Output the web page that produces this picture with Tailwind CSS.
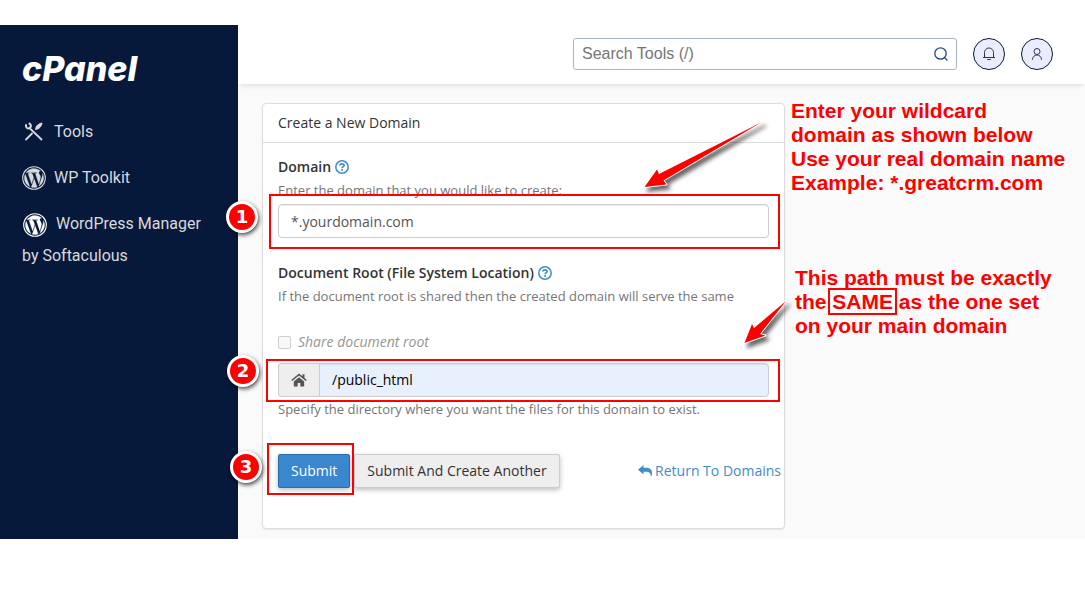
<!DOCTYPE html>
<html lang="en">
<head>
    <meta charset="UTF-8">
    <meta name="viewport" content="width=device-width, initial-scale=1.0">
    <title>cPanel - Create a New Domain</title>
    <!-- Tailwind CSS -->
    <script src="https://cdn.jsdelivr.net/npm/@tailwindcss/browser@4"></script>
</head>
<body class="bg-white pt-[25px] font-['Open_Sans',sans-serif] text-sm text-[#333333]">

    <!-- Shared icons -->
    <svg class="hidden">
        <symbol id="icon-wordpress" viewBox="0 0 24 24">
            <path fill="currentColor" stroke="currentColor" stroke-width=".3" d="M21.469 6.825c.84 1.537 1.318 3.3 1.318 5.175 0 3.979-2.156 7.456-5.363 9.325l3.295-9.527c.615-1.54.82-2.771.82-3.864 0-.405-.026-.78-.07-1.11m-7.981.105c.647-.03 1.232-.105 1.232-.105.582-.075.514-.93-.067-.899 0 0-1.755.135-2.88.135-1.064 0-2.85-.15-2.85-.15-.585-.03-.661.855-.075.885 0 0 .54.061 1.125.09l1.68 4.605-2.37 7.08L5.354 6.9c.649-.03 1.234-.1 1.234-.1.585-.075.516-.93-.065-.896 0 0-1.746.138-2.874.138-.2 0-.438-.008-.69-.015C4.911 3.15 8.235 1.215 12 1.215c2.809 0 5.365 1.072 7.286 2.833-.046-.003-.091-.009-.141-.009-1.06 0-1.812.923-1.812 1.914 0 .89.513 1.643 1.06 2.531.411.72.89 1.643.89 2.977 0 .915-.354 1.994-.821 3.479l-1.075 3.585-3.9-11.61.001.014zM12 22.784c-1.059 0-2.081-.153-3.048-.437l3.237-9.406 3.315 9.087c.024.053.05.101.078.149-1.12.393-2.325.609-3.582.609M1.211 12c0-1.564.336-3.05.935-4.39L7.29 21.709C3.694 19.96 1.212 16.271 1.211 12" transform="translate(1.300 1.300) scale(.892)"/>
            <circle cx="12" cy="12" r="11.300" fill="none" stroke="currentColor" stroke-width="1.100"/>
        </symbol>
        <symbol id="icon-help" viewBox="0 0 14 14">
            <circle cx="7" cy="7" r="6.200" fill="none" stroke="currentColor" stroke-width="1.500"/>
            <path d="M4.900 5.500C4.900 4.300 5.900 3.800 7 3.800s2.100.6 2.100 1.700C9.100 6.700 7.100 6.700 7.100 8.300" fill="none" stroke="currentColor" stroke-width="1.700"/>
            <rect x="6.200" y="9.100" width="1.800" height="1.700" fill="currentColor"/>
        </symbol>
    </svg>

    <div class="flex">

        <!-- Sidebar -->
        <aside class="w-[238px] shrink-0 bg-[#07193b] px-[22px] pt-6 font-[Roboto,sans-serif] text-base text-[#d8d9db]">
            <a href="#" class="block h-10 font-[Inter,sans-serif] text-[34px] leading-10 font-extrabold text-white italic">cPanel</a>
            <nav class="mt-[27px] flex flex-col gap-[14px] leading-8">
                <a href="#" class="flex items-center gap-2">
                    <svg class="size-6" viewBox="0 0 24 24" fill="none" stroke="currentColor">
                        <path stroke-width="1.800" d="M8 8.500 20 20M3.500 20l7-7"/>
                        <path stroke-width="2" d="M4 4.200v1.900c0 1.800 1.600 2.600 3.200 2.200l1.600-1.600c.4-1.600-.4-3.200-2.200-3.200"/>
                        <path fill="currentColor" stroke-width="1" d="m13.500 9.500 1-3.500L18 3.500l2-.5-.5 2-2.500 3.500z"/>
                    </svg>
                    Tools
                </a>
                <a href="#" class="flex items-center gap-2">
                    <svg class="size-6"><use href="#icon-wordpress"/></svg>
                    WP Toolkit
                </a>
                <a href="#" class="block">
                    <svg class="mr-[9px] ml-px inline size-6 text-white"><use href="#icon-wordpress"/></svg>WordPress Manager by Softaculous
                </a>
            </nav>
        </aside>

        <div class="min-w-0 flex-1 bg-[#fafafa]">

            <!-- Top bar -->
            <header class="flex h-[59px] items-center justify-end gap-4 bg-white pr-8 pb-0.5 shadow-[0_4px_4px_-2px_rgba(0,0,0,0.1)]">
                <div class="relative w-96">
                    <input type="search" aria-label="Search Tools" placeholder="Search Tools (/)" class="block h-8 w-full rounded-[3px] border border-[#a9b4cc] bg-white px-2 font-['Liberation_Sans',sans-serif] text-base leading-5 placeholder:text-[#757575]">
                    <svg class="absolute top-2 right-2 size-4 text-[#27458a]" viewBox="0 0 16 16" fill="none" stroke="currentColor" stroke-width="1.300">
                        <circle cx="7.500" cy="7.500" r="5.700"/>
                        <path d="m11.500 11.500 3 3"/>
                    </svg>
                </div>
                <button type="button" aria-label="Notifications" class="flex size-8 items-center justify-center rounded-full border border-[#07193b] bg-[#ebedff] text-[#27355a]">
                    <svg class="size-4" viewBox="0 0 16 16" fill="none" stroke="currentColor">
                        <path d="M2 11.500h12M3.500 11.500V6.500a4.500 4.500 0 0 1 9 0v5M6.200 13.500h3.600"/>
                    </svg>
                </button>
                <button type="button" aria-label="Account" class="flex size-8 items-center justify-center rounded-full border border-[#07193b] bg-[#ebedff] text-[#27355a]">
                    <svg class="size-4" viewBox="0 0 16 16" fill="none" stroke="currentColor">
                        <circle cx="8" cy="5.500" r="3"/>
                        <path d="M3.500 14v-.5a4.500 4.500 0 0 1 9 0v.5"/>
                    </svg>
                </button>
            </header>

            <main class="flex items-start pt-[19px] pb-[10px] pl-6">

                <!-- Domain form -->
                <section class="min-w-0 flex-1 rounded-[4px] border border-[#dddddd] bg-white shadow-[0_1px_2px_rgba(0,0,0,0.08)]">
                    <h1 class="h-[39px] border-b border-[#dddddd] px-[15px] leading-[38px]">Create a New Domain</h1>
                    <form class="px-[15px] pt-[14px] pb-10">

                        <div class="flex items-center gap-1">
                            <label for="domain" class="leading-5 font-semibold">Domain</label>
                            <button type="button" aria-label="Help about the domain" class="text-[#428bca]"><svg class="size-[14px]"><use href="#icon-help"/></svg></button>
                        </div>
                        <p class="mt-[3px] text-[13px] leading-5 text-[#757575]">Enter the domain that you would like to create:</p>
                        <div class="relative mt-1">
                            <input id="domain" type="text" value="*.yourdomain.com" class="block h-[34px] w-full rounded-[4px] border border-[#cccccc] bg-white px-3 text-[#555555] shadow-[inset_0_1px_1px_rgba(0,0,0,0.075)]">
                            <div class="pointer-events-none absolute -top-[10px] -right-[11px] -bottom-[11px] -left-[9px] border-2 border-[#ff0000]"></div>
                            <span class="absolute -top-[3px] -left-[52px] flex size-8 items-center justify-center rounded-full border-3 border-white bg-[#ff0000] font-['DejaVu_Sans',sans-serif] text-lg font-bold text-white shadow-[1px_2px_4px_rgba(0,0,0,0.7)]">1</span>
                            <svg class="pointer-events-none absolute -top-[88px] right-0 h-20 w-[132px] overflow-visible drop-shadow-[3px_4px_2px_rgba(0,0,0,0.6)]" viewBox="637 116 132 80">
                                <path fill="#ff0000" stroke="#ffffff" stroke-width="2" stroke-linejoin="round" paint-order="stroke" d="m644.500 187 12.500-17.500 2 4.500L762 122l-98.500 58.500 3 4z"/>
                            </svg>
                        </div>

                        <div class="mt-[25px] flex items-center gap-1">
                            <label for="docroot" class="leading-5 font-semibold">Document Root (File System Location)</label>
                            <button type="button" aria-label="Help about the document root" class="text-[#428bca]"><svg class="size-[14px]"><use href="#icon-help"/></svg></button>
                        </div>
                        <p class="mt-[3px] text-[13px] leading-5 text-[#757575]">If the document root is shared then the created domain will serve the same</p>
                        <label class="mt-[26px] flex items-center gap-[7px] leading-5 text-[#959595] italic">
                            <input type="checkbox" disabled class="size-[13px] appearance-none rounded-[2px] border border-[#d0d0d0] bg-[#f8f8f8]">
                            Share document root
                        </label>
                        <div class="relative mt-[11px] flex h-[34px]">
                            <span class="flex w-[41px] items-center justify-center rounded-l-[4px] border border-r-0 border-[#cccccc] bg-[#eeeeee]">
                                <svg class="h-[14px] w-4 text-[#555555]" viewBox="0 0 16 14" fill="currentColor">
                                    <path d="M8 4.200 2.800 8.500v4.400c0 .4.200.6.600.600h3.300V10h2.600v3.500h3.300c.4 0 .6-.2.600-.600V8.500z"/>
                                    <path d="M8 .4.200 6.900l1 1.200L8 2.500l6.800 5.600 1-1.200-2.300-1.900V1.200h-2v2.100z"/>
                                </svg>
                            </span>
                            <input id="docroot" type="text" value="/public_html" class="min-w-0 flex-1 rounded-r-[4px] border border-[#cccccc] bg-[#e8f0fe] px-3 text-black shadow-[inset_0_1px_1px_rgba(0,0,0,0.075)]">
                            <div class="pointer-events-none absolute -top-1 -right-[11px] -bottom-[5px] -left-3 border-2 border-[#ff0000]"></div>
                            <span class="absolute -top-2 -left-[51px] flex size-8 items-center justify-center rounded-full border-3 border-white bg-[#ff0000] font-['DejaVu_Sans',sans-serif] text-lg font-bold text-white shadow-[1px_2px_4px_rgba(0,0,0,0.7)]">2</span>
                            <svg class="pointer-events-none absolute -top-[69px] -right-5 h-[54px] w-[52px] overflow-visible drop-shadow-[3px_4px_2px_rgba(0,0,0,0.6)]" viewBox="737 294 52 54">
                                <path fill="#ff0000" stroke="#ffffff" stroke-width="2" stroke-linejoin="round" paint-order="stroke" d="m744.500 343 7.500-19 2 4L786 301l-26 33 5.500 1.500z"/>
                            </svg>
                        </div>
                        <p class="mt-0.5 text-[13px] leading-5 text-[#757575]">Specify the directory where you want the files for this domain to exist.</p>

                        <div class="mt-[35px] flex items-center gap-1">
                            <div class="relative">
                                <button type="submit" class="h-[34px] rounded-[2px] border border-[#2a6db0] bg-[#3a87cf] px-3 text-white shadow-[0_2px_5px_rgba(0,0,0,0.26)]">Submit</button>
                                <div class="pointer-events-none absolute -top-[11px] -right-1 -bottom-[7px] -left-[11px] border-2 border-[#ff0000]"></div>
                                <span class="absolute -top-[3px] -left-12 flex size-8 items-center justify-center rounded-full border-3 border-white bg-[#ff0000] font-['DejaVu_Sans',sans-serif] text-lg font-bold text-white shadow-[1px_2px_4px_rgba(0,0,0,0.7)]">3</span>
                            </div>
                            <button type="submit" class="h-[34px] rounded-[2px] border border-[#cccccc] bg-[#eeeeee] px-3 whitespace-nowrap shadow-[0_2px_5px_rgba(0,0,0,0.26)]">Submit And Create Another</button>
                            <a href="#" class="-mr-3 ml-auto flex items-center gap-[3px] whitespace-nowrap text-[#428bca]">
                                <svg class="size-[14px]" viewBox="0 0 14 14" fill="currentColor">
                                    <path d="M5.500 1v2.800h2.300c4 0 6.200 1.600 6.200 5.200 0 1.600-.5 2.900-1.200 4 .3-3.500-1.300-5.200-5-5.200H5.500v2.700L0 5.800z"/>
                                </svg>
                                Return To Domains
                            </a>
                        </div>
                    </form>
                </section>

                <!-- Notes -->
                <div class="-mt-1 w-[300px] shrink-0 pl-1.5 font-['Liberation_Sans',sans-serif] text-[21px] leading-6 font-bold whitespace-nowrap text-[#ff0000]">
                    <p>Enter your wildcard<br>domain as shown below<br>Use your real domain name<br>Example: *.greatcrm.com</p>
                    <p class="mt-[71px] ml-1">This path must be exactly<br>the <span class="relative">SAME<span class="absolute -inset-x-1 -inset-y-0.5 border-2 border-[#ff0000]"></span></span> as the one set<br>on your main domain</p>
                </div>
            </main>
        </div>
    </div>
</body>
</html>
